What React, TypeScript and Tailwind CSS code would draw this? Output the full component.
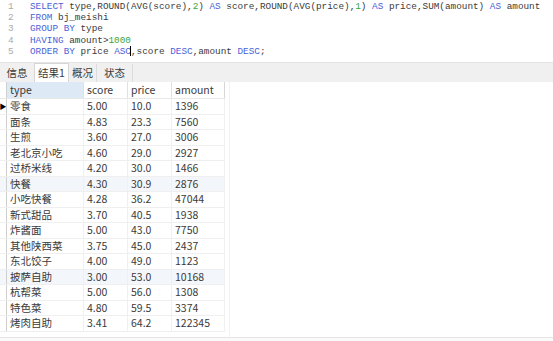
const rows = [
  ["零食", "5.00", "10.0", "1396"],
  ["面条", "4.83", "23.3", "7560"],
  ["生煎", "3.60", "27.0", "3006"],
  ["老北京小吃", "4.60", "29.0", "2927"],
  ["过桥米线", "4.20", "30.0", "1466"],
  ["快餐", "4.30", "30.9", "2876"],
  ["小吃快餐", "4.28", "36.2", "47044"],
  ["新式甜品", "3.70", "40.5", "1938"],
  ["炸酱面", "5.00", "43.0", "7750"],
  ["其他陕西菜", "3.75", "45.0", "2437"],
  ["东北饺子", "4.00", "49.0", "1123"],
  ["披萨自助", "3.00", "53.0", "10168"],
  ["杭帮菜", "5.00", "56.0", "1308"],
  ["特色菜", "4.80", "59.5", "3374"],
  ["烤肉自助", "3.41", "64.2", "122345"],
];

const K = ({ children }: { children: React.ReactNode }) => <span className="text-[#4a62d8]">{children}</span>;
const N = ({ children }: { children: React.ReactNode }) => <span className="text-[#3aa33a]">{children}</span>;

export default function App() {
  const mono = { fontFamily: '"Liberation Mono", monospace' };
  const cjk = { fontFamily: '"Noto Sans CJK SC", "Noto Sans", sans-serif' };
  return (
    <div className="w-[553px] h-[341px] bg-white overflow-hidden flex flex-col text-[#3a3a3a]">
      {/* editor */}
      <div className="h-[62px] pt-[1px] text-[9.35px] leading-[11.2px] whitespace-pre" style={mono}>
        {[
          <><K>SELECT</K> type,ROUND(AVG(score),<N>2</N>) <K>AS</K> score,ROUND(AVG(price),<N>1</N>) <K>AS</K> price,SUM(amount) <K>AS</K> amount</>,
          <><K>FROM</K> bj_meishi</>,
          <><K>GROUP BY</K> type</>,
          <><K>HAVING</K> amount&gt;<N>1000</N></>,
          <><K>ORDER BY</K> price <K>ASC</K><span className="inline-block w-px h-[10px] bg-black align-middle -mx-[0.5px]"></span>,score <K>DESC</K>,amount <K>DESC</K>;</>,
        ].map((line, i) => (
          <div key={i} className="flex">
            <span className="w-[30px] pl-[8px] text-[#aaa]">{i + 1}</span>
            <span>{line}</span>
          </div>
        ))}
      </div>

      {/* tabs */}
      <div className="h-[20px] bg-[#f0f0f0] border-t border-[#e4e4e4] flex items-end text-[10.5px]" style={cjk}>
        <div className="w-[34px] h-[18px] flex items-center justify-center">信息</div>
        <div className="w-[35px] h-[19px] bg-white border border-b-0 border-[#d6d6d6] flex items-center justify-center">结果1</div>
        <div className="w-[28px] h-[18px] border-r border-[#dcdcdc] flex items-center justify-center">概况</div>
        <div className="w-[36px] h-[18px] border-r border-[#dcdcdc] flex items-center justify-center">状态</div>
      </div>

      {/* grid */}
      <div className="flex-1 flex text-[10.5px]" style={cjk}>
        <div className="flex flex-col border-r border-[#f2f2f2] pr-[4px]">
          <div className="flex border-b border-[#e8e8e8]">
            <div className="w-[7px] border-r border-[#cfcfcf]"></div>
            <div className="w-[77px] h-[16px] pl-[3px] bg-[#dde9f5] flex items-center border-r border-[#e0e0e0]">type</div>
            <div className="w-[44px] h-[16px] pl-[3px] flex items-center border-r border-[#e0e0e0]">score</div>
            <div className="w-[44px] h-[16px] pl-[3px] flex items-center border-r border-[#e0e0e0]">price</div>
            <div className="w-[53px] h-[16px] pl-[3px] flex items-center border-r border-[#d8d8d8]">amount</div>
          </div>
          {rows.map((r, i) => (
            <div key={i} className={`flex h-[15.5px] border-b border-[#efefef] ${i === 5 || i === 11 ? "bg-[#f3f7fc]" : ""}`}>
              <div className="w-[7px] border-r border-[#cfcfcf] flex items-center justify-center">
                {i === 0 && <span className="text-[7px] leading-none text-black">▶</span>}
              </div>
              <div className="w-[77px] pl-[3px] flex items-center border-r border-[#f0f0f0]">{r[0]}</div>
              <div className="w-[44px] pl-[3px] flex items-center border-r border-[#f0f0f0]">{r[1]}</div>
              <div className="w-[44px] pl-[3px] flex items-center border-r border-[#f0f0f0]">{r[2]}</div>
              <div className="w-[53px] pl-[3px] flex items-center border-r border-[#f0f0f0]">{r[3]}</div>
            </div>
          ))}
        </div>
      </div>
      <div className="h-[4px] border-t border-[#e6e6e6] bg-[#fafafa]"></div>
    </div>
  );
}
